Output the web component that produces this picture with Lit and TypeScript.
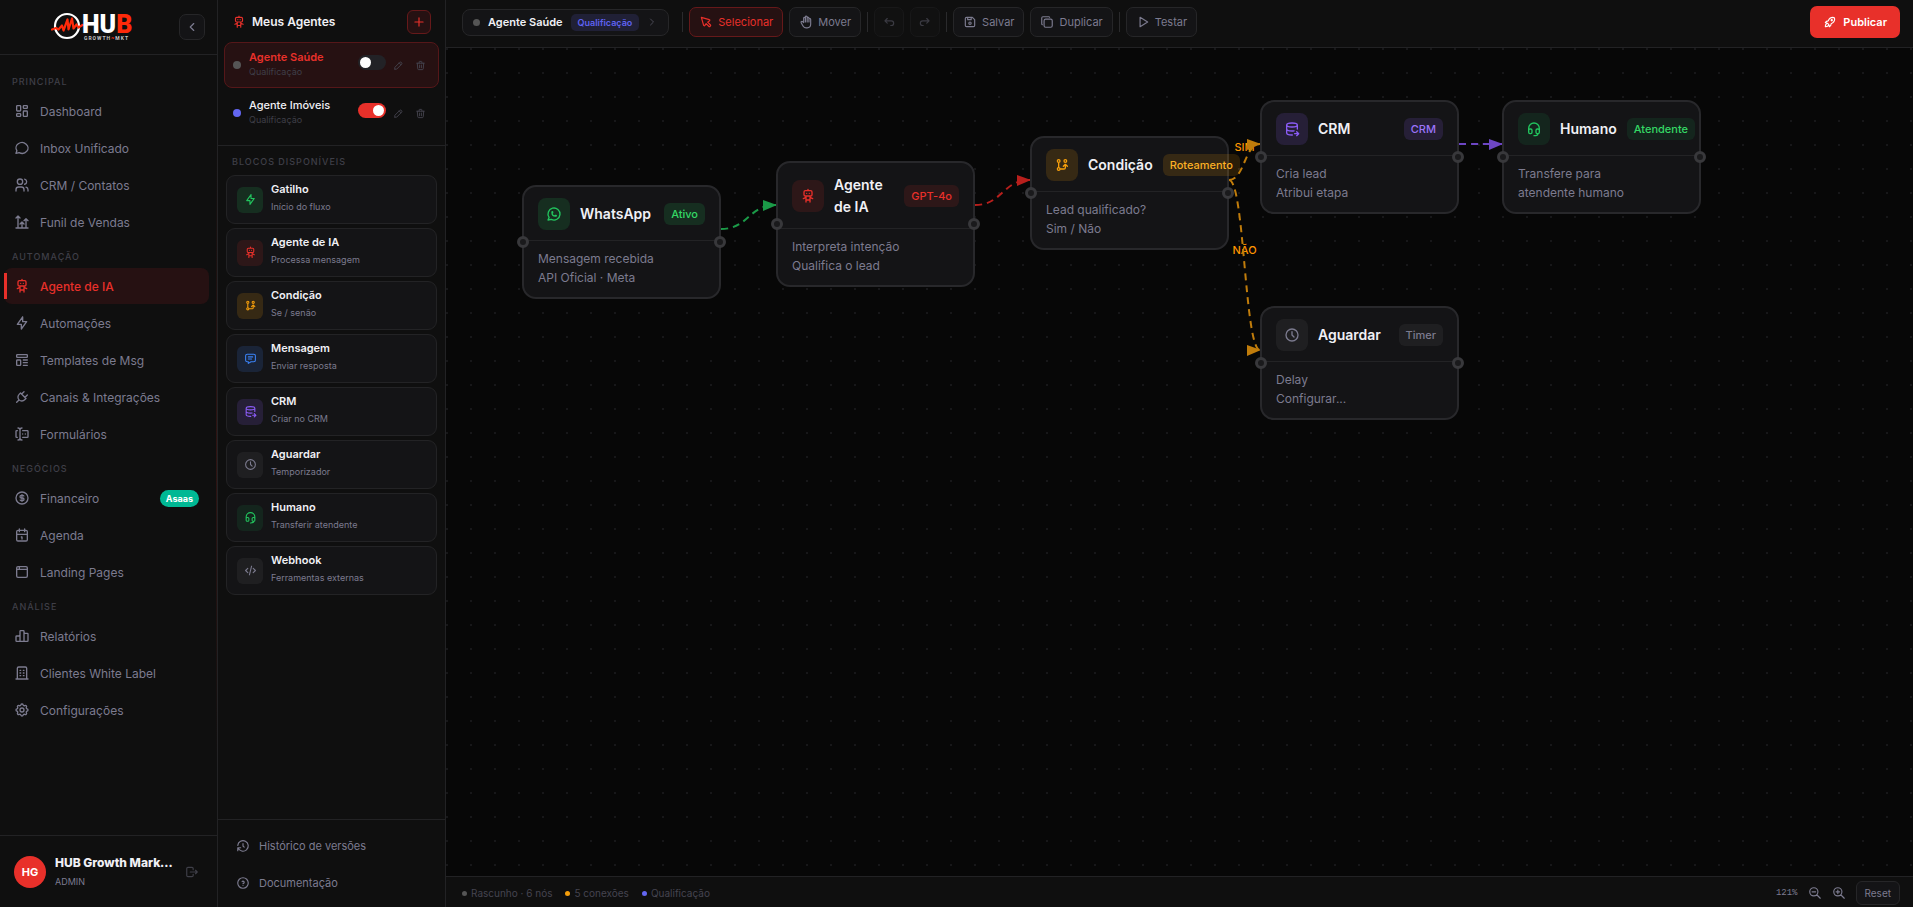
import { LitElement, html, css, svg, nothing } from "lit";
import { customElement } from "lit/decorators.js";
import { classMap } from "lit/directives/class-map.js";

const box = "a1 1 0 0 1 1 1v6a1 1 0 0 1 -1 1h-4a1 1 0 0 1 -1 -1v-6a1 1 0 0 1 1 -1";
const boxLow = "a1 1 0 0 1 1 1v2a1 1 0 0 1 -1 1h-4a1 1 0 0 1 -1 -1v-2a1 1 0 0 1 1 -1";
const ring = "M3 12a9 9 0 1 0 18 0a9 9 0 1 0 -18 0";

const ICONS: Record<string, string> = {
  dashboard: `M5 4h4${box}M5 16h4${boxLow}M15 12h4${box}M15 4h4${boxLow}`,
  chat: "M3 20l1.3 -3.9c-2.324 -3.437 -1.426 -7.872 2.1 -10.374c3.526 -2.501 8.59 -2.296 11.845 .48c3.255 2.777 3.695 7.266 1.029 10.501c-2.666 3.235 -7.615 4.215 -11.574 2.293l-4.7 1",
  users: "M5 7a4 4 0 1 0 8 0a4 4 0 1 0 -8 0M3 21v-2a4 4 0 0 1 4 -4h4a4 4 0 0 1 4 4v2M16 3.13a4 4 0 0 1 0 7.75M21 21v-2a4 4 0 0 0 -3 -3.85",
  funnel: "M18 21v-14M9 15l3 -3l3 3M15 10l3 -3l3 3M3 21h18M12 21v-9M3 6l3 -3l3 3M6 21v-18",
  robot: "M6 6a2 2 0 0 1 2 -2h8a2 2 0 0 1 2 2v4a2 2 0 0 1 -2 2h-8a2 2 0 0 1 -2 -2zM12 2v2M9 12v9M15 12v9M5 16l4 -2M15 14l4 2M9 18h6M10 8v.01M14 8v.01",
  bolt: "M13 3v7h6l-8 11v-7h-6l8 -11",
  template: "M4 5a1 1 0 0 1 1 -1h14a1 1 0 0 1 1 1v2a1 1 0 0 1 -1 1h-14a1 1 0 0 1 -1 -1zM4 13a1 1 0 0 1 1 -1h4a1 1 0 0 1 1 1v6a1 1 0 0 1 -1 1h-4a1 1 0 0 1 -1 -1zM14 12h6M14 16h6M14 20h6",
  plug: "M9.785 6l8.215 8.215l-2.054 2.054a5.81 5.81 0 1 1 -8.215 -8.215l2.054 -2.054zM4 20l3.5 -3.5M15 4l-3.5 3.5M20 9l-3.5 3.5",
  forms: "M12 3a3 3 0 0 0 -3 3v12a3 3 0 0 0 3 3M6 3a3 3 0 0 1 3 3v12a3 3 0 0 1 -3 3M13 7h7a1 1 0 0 1 1 1v8a1 1 0 0 1 -1 1h-7M5 7h-1a1 1 0 0 0 -1 1v8a1 1 0 0 0 1 1h1M17 12h.01M13 12h.01",
  coin: `${ring}M14.8 9a2 2 0 0 0 -1.8 -1h-2a2 2 0 1 0 0 4h2a2 2 0 1 1 0 4h-2a2 2 0 0 1 -1.8 -1M12 7v10`,
  calendar: "M4 7a2 2 0 0 1 2 -2h12a2 2 0 0 1 2 2v12a2 2 0 0 1 -2 2h-12a2 2 0 0 1 -2 -2zM16 3v4M8 3v4M4 11h16M11 15h1M12 15v3",
  browser: "M4 6a2 2 0 0 1 2 -2h12a2 2 0 0 1 2 2v12a2 2 0 0 1 -2 2h-12a2 2 0 0 1 -2 -2zM4 8h16M8 4v4",
  chart: "M3 13a1 1 0 0 1 1 -1h4a1 1 0 0 1 1 1v6a1 1 0 0 1 -1 1h-4a1 1 0 0 1 -1 -1zM15 9a1 1 0 0 1 1 -1h4a1 1 0 0 1 1 1v10a1 1 0 0 1 -1 1h-4a1 1 0 0 1 -1 -1zM9 5a1 1 0 0 1 1 -1h4a1 1 0 0 1 1 1v14a1 1 0 0 1 -1 1h-4a1 1 0 0 1 -1 -1z",
  building: "M3 21h18M9 8h1M9 12h1M9 16h1M14 8h1M14 12h1M14 16h1M5 21v-16a2 2 0 0 1 2 -2h10a2 2 0 0 1 2 2v16",
  gear: "M10.325 4.317c.426 -1.756 2.924 -1.756 3.35 0a1.724 1.724 0 0 0 2.573 1.066c1.543 -.94 3.31 .826 2.37 2.37a1.724 1.724 0 0 0 1.065 2.572c1.756 .426 1.756 2.924 0 3.35a1.724 1.724 0 0 0 -1.066 2.573c.94 1.543 -.826 3.31 -2.37 2.37a1.724 1.724 0 0 0 -2.572 1.065c-.426 1.756 -2.924 1.756 -3.35 0a1.724 1.724 0 0 0 -2.573 -1.066c-1.543 .94 -3.31 -.826 -2.37 -2.37a1.724 1.724 0 0 0 -1.065 -2.572c-1.756 -.426 -1.756 -2.924 0 -3.35a1.724 1.724 0 0 0 1.066 -2.573c-.94 -1.543 .826 -3.31 2.37 -2.37c1 .608 2.296 .07 2.572 -1.065zM9 12a3 3 0 1 0 6 0a3 3 0 0 0 -6 0",
  branch: "M5 18a2 2 0 1 0 4 0a2 2 0 1 0 -4 0M5 6a2 2 0 1 0 4 0a2 2 0 1 0 -4 0M15 6a2 2 0 1 0 4 0a2 2 0 1 0 -4 0M7 8v8M9 18h6a2 2 0 0 0 2 -2v-5M14 14l3 -3l3 3",
  message: "M8 9h8M8 13h6M18 4a3 3 0 0 1 3 3v8a3 3 0 0 1 -3 3h-5l-5 3v-3h-2a3 3 0 0 1 -3 -3v-8a3 3 0 0 1 3 -3h12z",
  database: "M4 6c0 1.657 3.582 3 8 3s8 -1.343 8 -3s-3.582 -3 -8 -3s-8 1.343 -8 3M4 6v6c0 1.657 3.582 3 8 3c1.118 0 2.183 -.086 3.15 -.241M20 12v-6M4 12v6c0 1.657 3.582 3 8 3c.157 0 .312 -.002 .466 -.005M16 19h6M19 16l3 3l-3 3",
  clock: `${ring}M12 7v5l3 3`,
  headset: "M4 14v-3a8 8 0 1 1 16 0v3M18 19c0 1.657 -2.686 3 -6 3M4 14a2 2 0 0 1 2 -2h1a2 2 0 0 1 2 2v3a2 2 0 0 1 -2 2h-1a2 2 0 0 1 -2 -2v-3zM15 14a2 2 0 0 1 2 -2h1a2 2 0 0 1 2 2v3a2 2 0 0 1 -2 2h-1a2 2 0 0 1 -2 -2v-3z",
  code: "M7 8l-4 4l4 4M17 8l4 4l-4 4M14 4l-4 16",
  whatsapp: "M3 21l1.65 -3.8a9 9 0 1 1 3.4 2.9l-5.05 .9M9 10a.5 .5 0 0 0 1 0v-1a.5 .5 0 0 0 -1 0v1a5 5 0 0 0 5 5h1a.5 .5 0 0 0 0 -1h-1a.5 .5 0 0 0 0 1",
  pointer: "M7.904 17.563a1.2 1.2 0 0 0 2.228 .308l2.09 -3.093l4.907 4.907a1.067 1.067 0 0 0 1.509 0l1.047 -1.047a1.067 1.067 0 0 0 0 -1.509l-4.907 -4.907l3.113 -2.09a1.2 1.2 0 0 0 -.309 -2.228l-13.582 -3.904l3.904 13.563z",
  hand: "M8 13v-7.5a1.5 1.5 0 0 1 3 0v6.5M11 5.5v-2a1.5 1.5 0 1 1 3 0v8.5M14 5.5a1.5 1.5 0 0 1 3 0v6.5M17 7.5a1.5 1.5 0 0 1 3 0v8.5a6 6 0 0 1 -6 6h-2h.208a6 6 0 0 1 -5.012 -2.7a69.74 69.74 0 0 1 -.196 -.3c-.312 -.479 -1.407 -2.388 -3.286 -5.728a1.5 1.5 0 0 1 .536 -2.022a1.867 1.867 0 0 1 2.28 .28l1.47 1.47",
  undo: "M9 14l-4 -4l4 -4M5 10h11a4 4 0 1 1 0 8h-1",
  redo: "M15 14l4 -4l-4 -4M19 10h-11a4 4 0 1 0 0 8h1",
  save: "M6 4h10l4 4v10a2 2 0 0 1 -2 2h-12a2 2 0 0 1 -2 -2v-12a2 2 0 0 1 2 -2M10 14a2 2 0 1 0 4 0a2 2 0 1 0 -4 0M14 4v4h-6v-4",
  copy: "M7 9.667a2.667 2.667 0 0 1 2.667 -2.667h8.666a2.667 2.667 0 0 1 2.667 2.667v8.666a2.667 2.667 0 0 1 -2.667 2.667h-8.666a2.667 2.667 0 0 1 -2.667 -2.667zM4.012 16.737a2.005 2.005 0 0 1 -1.012 -1.737v-10c0 -1.1 .9 -2 2 -2h10c.75 0 1.158 .385 1.5 1",
  play: "M7 4v16l13 -8z",
  rocket: "M4 13a8 8 0 0 1 7 7a6 6 0 0 0 3 -5a9 9 0 0 0 6 -8a3 3 0 0 0 -3 -3a9 9 0 0 0 -8 6a6 6 0 0 0 -5 3M7 14a6 6 0 0 0 -3 6a6 6 0 0 0 6 -3M14 9a1 1 0 1 0 2 0a1 1 0 1 0 -2 0",
  history: "M12 8v4l2 2M3.05 11a9 9 0 1 1 .5 4m-.5 5v-5h5",
  help: `${ring}M12 16v.01M12 13a2 2 0 0 0 .914 -3.782a1.98 1.98 0 0 0 -2.414 .483`,
  logout: "M14 8v-2a2 2 0 0 0 -2 -2h-7a2 2 0 0 0 -2 2v12a2 2 0 0 0 2 2h7a2 2 0 0 0 2 -2v-2M9 12h12l-3 -3M18 15l3 -3",
  pencil: "M4 20h4l10.5 -10.5a2.828 2.828 0 1 0 -4 -4l-10.5 10.5v4M13.5 6.5l4 4",
  trash: "M4 7h16M10 11v6M14 11v6M5 7l1 12a2 2 0 0 0 2 2h8a2 2 0 0 0 2 -2l1 -12M9 7v-3a1 1 0 0 1 1 -1h4a1 1 0 0 1 1 1v3",
  left: "M15 6l-6 6l6 6",
  right: "M9 6l6 6l-6 6",
  plus: "M12 5v14M5 12h14",
  zoomIn: "M3 10a7 7 0 1 0 14 0a7 7 0 1 0 -14 0M7 10h6M10 7v6M21 21l-6 -6",
  zoomOut: "M3 10a7 7 0 1 0 14 0a7 7 0 1 0 -14 0M7 10h6M21 21l-6 -6",
};

const icon = (name: string, size = 14) => html`<svg class="icon" width=${size} height=${size} viewBox="0 0 24 24"
  fill="none" stroke="currentColor" stroke-width="2" stroke-linecap="round" stroke-linejoin="round"
  aria-hidden="true"><path d=${ICONS[name]}></path></svg>`;

const shared = css`
  :host { box-sizing: border-box; font-family: Inter, "Liberation Sans", sans-serif; color: #f0f0f5; }
  *, *::before, *::after { box-sizing: border-box; }
  .icon { display: block; flex: none; }
  button { font: inherit; color: inherit; background: none; border: 0; padding: 0; margin: 0; cursor: pointer; }
  a { color: inherit; text-decoration: none; }
  .tile { display: flex; align-items: center; justify-content: center; flex: none; }
  .green { color: #22c55e; background: rgba(34, 197, 94, 0.15); }
  .mint { color: #22c55e; background: rgba(34, 197, 94, 0.1); }
  .red { color: #e8302a; background: rgba(232, 48, 42, 0.12); }
  .amber { color: #f59e0b; background: rgba(245, 158, 11, 0.15); }
  .blue { color: #3b82f6; background: rgba(59, 130, 246, 0.15); }
  .purple { color: #8b5cf6; background: rgba(139, 92, 246, 0.15); }
  .gray { color: #7c7b8f; background: rgba(255, 255, 255, 0.05); }
`;

interface NavItem { icon: string; label: string; badge?: string; active?: boolean; }

@customElement("side-nav")
export class SideNav extends LitElement {
  static styles = [shared, css`
    :host { display: flex; flex-direction: column; width: 218px; flex: none; position: relative;
      background: #0f0f0f; border-right: 1px solid #222224; }
    :host::after { content: ""; position: absolute; top: 15%; bottom: 15%; right: 0; width: 1px;
      background: linear-gradient(transparent, rgba(232, 48, 42, 0.15), transparent); }
    header { display: flex; align-items: center; height: 55px; padding: 0 12px 0 51px; border-bottom: 1px solid #222224; }
    .collapse { margin-left: auto; width: 26px; height: 26px; border: 1px solid #262628; border-radius: 7px;
      background: #141416; color: #7c7b8f; }
    .mark { font-family: Roboto, sans-serif; font-weight: 900; font-size: 25px; }
    .tagline { font-family: Roboto, sans-serif; font-weight: 700; font-size: 5px; letter-spacing: 1px; }
    nav { flex: 1; padding: 11px 8px 0 4px; }
    h2 { margin: 0; padding: 10px 8px 5px; font-size: 9px; line-height: 12px; font-weight: 500;
      letter-spacing: 1px; color: #3f3f48; }
    .item { position: relative; display: flex; align-items: center; gap: 10px; height: 36px; margin-bottom: 1px;
      padding: 0 10px; border-radius: 8px; font-size: 12px; color: #7c7b8f; }
    .item.active { background: #261112; color: #e8302a; font-weight: 500; }
    .item.active::before { content: ""; position: absolute; left: 0; top: 5px; bottom: 5px; width: 3px; background: #e8302a; }
    .badge { margin-left: auto; padding: 0 6px; border-radius: 9px; background: #00b894; color: #fff;
      font-size: 9px; line-height: 17px; font-weight: 700; }
    footer { display: flex; align-items: center; height: 72px; padding: 0 18px 0 14px; border-top: 1px solid #222224; }
    .avatar { width: 32px; height: 32px; border-radius: 50%; background: #e8302a; color: #fff;
      font-size: 11px; font-weight: 700; }
    .who { flex: 1; min-width: 0; padding: 0 8px 0 9px; }
    .name { font-size: 12px; line-height: 20px; font-weight: 800; overflow: hidden; text-overflow: ellipsis; white-space: nowrap; }
    .role { font-size: 9px; line-height: 18px; color: #7c7b8f; }
    .logout { color: #3f3f48; }
  `];

  private groups: { title: string; items: NavItem[] }[] = [
    { title: "PRINCIPAL", items: [
      { icon: "dashboard", label: "Dashboard" }, { icon: "chat", label: "Inbox Unificado" },
      { icon: "users", label: "CRM / Contatos" }, { icon: "funnel", label: "Funil de Vendas" }] },
    { title: "AUTOMAÇÃO", items: [
      { icon: "robot", label: "Agente de IA", active: true }, { icon: "bolt", label: "Automações" },
      { icon: "template", label: "Templates de Msg" }, { icon: "plug", label: "Canais & Integrações" },
      { icon: "forms", label: "Formulários" }] },
    { title: "NEGÓCIOS", items: [
      { icon: "coin", label: "Financeiro", badge: "Asaas" }, { icon: "calendar", label: "Agenda" },
      { icon: "browser", label: "Landing Pages" }] },
    { title: "ANÁLISE", items: [
      { icon: "chart", label: "Relatórios" }, { icon: "building", label: "Clientes White Label" },
      { icon: "gear", label: "Configurações" }] },
  ];

  render() {
    return html`
      <header>
        <svg class="icon" width="84" height="30" viewBox="0 0 84 30" role="img" aria-label="HUB Growth MKT">
          <circle cx="16" cy="14" r="12" fill="none" stroke="#fff" stroke-width="2.2"></circle>
          <path d="M1 17.5l4 -1.5l2.5 1.5l3.5 -4l1.5 5l4 -11l1 10l3.5 -11l1.5 10l3 -4l2 3l4 -2.5"
            fill="none" stroke="#ff2a0a" stroke-width="2.2" stroke-linejoin="round" stroke-linecap="round"></path>
          <text class="mark" x="31" y="21" fill="#fff">HU<tspan fill="#ff2a0a">B</tspan></text>
          <text class="tagline" x="33" y="28" fill="#c8c8c8">GROWTH<tspan fill="#ff2a0a">~</tspan>MKT</text>
        </svg>
        <button class="tile collapse" aria-label="Recolher menu">${icon("left", 14)}</button>
      </header>
      <nav>
        ${this.groups.map((g) => html`
          <h2>${g.title}</h2>
          ${g.items.map((i) => html`
            <a class=${classMap({ item: true, active: !!i.active })} href="#">
              ${icon(i.icon, 16)}<span>${i.label}</span>
              ${i.badge ? html`<span class="badge">${i.badge}</span>` : nothing}
            </a>`)}`)}
      </nav>
      <footer>
        <div class="tile avatar">HG</div>
        <div class="who"><div class="name">HUB Growth Marketing</div><div class="role">ADMIN</div></div>
        <button class="logout" aria-label="Sair">${icon("logout", 14)}</button>
      </footer>`;
  }
}

@customElement("agents-panel")
export class AgentsPanel extends LitElement {
  static styles = [shared, css`
    :host { display: flex; flex-direction: column; width: 228px; flex: none; background: #0f0f0f; border-right: 1px solid #222224; }
    header { display: flex; align-items: center; gap: 6px; padding: 10px 14px 8px 14px; color: #e8302a; }
    h1 { flex: 1; margin: 0; font-size: 12px; line-height: 24px; font-weight: 600; color: #f0f0f5; }
    .add { width: 24px; height: 24px; border: 1px solid #66191a; border-radius: 6px; background: #261112; color: #e8302a; }
    .agents { display: grid; gap: 2px; padding: 0 6px 9px; border-bottom: 1px solid #222224; }
    .agent { display: flex; align-items: center; height: 46px; padding: 0 7px 0 8px; border: 1px solid transparent; border-radius: 8px; }
    .agent.active { background: #261112; border-color: #551719; }
    .dot { width: 8px; height: 8px; border-radius: 50%; background: #6366f1; }
    .active .dot { background: #555; }
    .info { flex: 1; padding: 0 0 2px 8px; }
    .name { font-size: 11px; line-height: 15px; font-weight: 500; }
    .active .name { color: #e8302a; font-weight: 600; }
    .sub { font-size: 9px; line-height: 13px; color: #3f3f48; }
    .switch { display: flex; padding-bottom: 5px; }
    .switch input { appearance: none; margin: 0; width: 28px; height: 15px; border-radius: 8px; background: #222226;
      display: flex; align-items: center; padding: 0 2px; cursor: pointer; }
    .switch input::before { content: ""; width: 11px; height: 11px; border-radius: 50%; background: #fff; }
    .switch input:checked { background: #e8302a; justify-content: flex-end; }
    .tool { width: 22px; height: 22px; color: #45444f; }
    .switch + .tool { margin-left: 1px; }
    .blocks { flex: 1; padding: 10px 8px; }
    h2 { margin: 0 0 7px; padding: 0 6px; font-size: 9px; line-height: 12px; font-weight: 500; letter-spacing: 1px; color: #3f3f48; }
    ul { display: grid; gap: 4px; margin: 0; padding: 0; list-style: none; }
    .block { display: flex; align-items: center; gap: 8px; width: 100%; height: 49px; padding: 0 10px; text-align: left;
      border: 1px solid #232325; border-radius: 9px; background: #141416; }
    .block .tile { width: 26px; height: 26px; border-radius: 6px; }
    .text { padding-bottom: 3px; }
    .title { font-size: 11px; line-height: 18px; font-weight: 600; }
    .note { font-size: 9px; line-height: 18px; color: #7c7b8f; }
    footer { padding: 7px 18px 6px; border-top: 1px solid #222224; }
    footer a { display: flex; align-items: center; gap: 9px; height: 37px; font-size: 11px; color: #7c7b8f; }
  `];

  private blocks = [
    ["bolt", "green", "Gatilho", "Início do fluxo"],
    ["robot", "red", "Agente de IA", "Processa mensagem"],
    ["branch", "amber", "Condição", "Se / senão"],
    ["message", "blue", "Mensagem", "Enviar resposta"],
    ["database", "purple", "CRM", "Criar no CRM"],
    ["clock", "gray", "Aguardar", "Temporizador"],
    ["headset", "mint", "Humano", "Transferir atendente"],
    ["code", "gray", "Webhook", "Ferramentas externas"],
  ];

  private agent(name: string, on: boolean, active: boolean) {
    return html`<div class=${classMap({ agent: true, active })}>
      <span class="dot"></span>
      <div class="info"><div class="name">${name}</div><div class="sub">Qualificação</div></div>
      <label class="switch"><input type="checkbox" role="switch" aria-label=${"Ativar " + name} .checked=${on}></label>
      <button class="tile tool" aria-label=${"Editar " + name}>${icon("pencil", 11)}</button>
      <button class="tile tool" aria-label=${"Excluir " + name}>${icon("trash", 11)}</button>
    </div>`;
  }

  render() {
    return html`
      <header>${icon("robot", 14)}<h1>Meus Agentes</h1>
        <button class="tile add" aria-label="Novo agente">${icon("plus", 14)}</button></header>
      <section class="agents">
        ${this.agent("Agente Saúde", false, true)}
        ${this.agent("Agente Imóveis", true, false)}
      </section>
      <section class="blocks">
        <h2>BLOCOS DISPONÍVEIS</h2>
        <ul>${this.blocks.map(([ic, tone, title, note]) => html`<li><button class="block" draggable="true">
          <span class="tile ${tone}">${icon(ic, 13)}</span>
          <div class="text"><div class="title">${title}</div><div class="note">${note}</div></div>
        </button></li>`)}</ul>
      </section>
      <footer>
        <a href="#">${icon("history", 14)}Histórico de versões</a>
        <a href="#">${icon("help", 14)}Documentação</a>
      </footer>`;
  }
}

@customElement("editor-toolbar")
export class EditorToolbar extends LitElement {
  static styles = [shared, css`
    :host { display: flex; align-items: center; gap: 6px; height: 48px; padding: 0 13px 3px 16px;
      background: #0f0f0f; border-bottom: 1px solid #222224; font-size: 11px; white-space: nowrap; }
    button, .icon { flex: none; }
    .current { display: flex; align-items: center; height: 27px; padding: 0 10px; margin-right: 7px;
      border: 1px solid #262628; border-radius: 8px; background: #141416; font-weight: 600; }
    .dot { width: 7px; height: 7px; margin-right: 8px; border-radius: 50%; background: #555; }
    .kind { margin: 0 7px 0 8px; padding: 0 7px; border-radius: 5px; background: rgba(99, 102, 241, 0.15);
      color: #5f62f0; font-size: 9px; line-height: 17px; }
    .current .icon { color: #4a4955; }
    .rule { width: 1px; height: 20px; background: #2a2a2c; }
    .action { display: flex; align-items: center; justify-content: center; gap: 5px; height: 30px; padding: 0 9px;
      border: 1px solid #262628; border-radius: 7px; background: #141416; color: #7c7b8f; }
    .action.active { border-color: #66191a; background: #261112; color: #e8302a; }
    .square { width: 30px; padding: 0; }
    .square:disabled { opacity: 0.4; }
    .publish { display: flex; align-items: center; gap: 6px; height: 32px; margin-left: auto; padding: 0 13px;
      border-radius: 7px; background: #e8302a; color: #fff; font-weight: 600; }
  `];

  render() {
    return html`
      <button class="current"><span class="dot"></span>Agente Saúde<span class="kind">Qualificação</span>${icon("right", 12)}</button>
      <span class="rule"></span>
      <button class="action active" aria-pressed="true">${icon("pointer")}Selecionar</button>
      <button class="action">${icon("hand")}Mover</button>
      <span class="rule"></span>
      <button class="action square" disabled aria-label="Desfazer">${icon("undo")}</button>
      <button class="action square" disabled aria-label="Refazer">${icon("redo")}</button>
      <span class="rule"></span>
      <button class="action">${icon("save")}Salvar</button>
      <button class="action">${icon("copy")}Duplicar</button>
      <span class="rule"></span>
      <button class="action">${icon("play")}Testar</button>
      <button class="publish">${icon("rocket")}Publicar</button>`;
  }
}

interface FlowNode { x: number; y: number; icon: string; tone: string; title: string; tag: string; lines: string[]; }

const NODE_WIDTH = 199;

@customElement("flow-canvas")
export class FlowCanvas extends LitElement {
  static styles = [shared, css`
    :host { display: block; position: relative; overflow: hidden; background-color: #070707;
      background-image: radial-gradient(circle at 1px 1px, #171719 1px, transparent 1px); background-size: 24px 24px; }
    .edges { position: absolute; inset: 0; width: 100%; height: 100%; }
    .edge { fill: none; stroke-width: 2; stroke-dasharray: 7 5; }
    .edge-label { font-size: 11px; font-weight: 500; fill: #ff9500; text-anchor: middle; }
    .node { position: absolute; width: 199px; border: 2px solid #28282b; border-radius: 14px; background: #141416; }
    .head { display: flex; align-items: center; gap: 10px; padding: 11px 14px 10px; border-bottom: 1px solid #232325; }
    .head .tile { width: 32px; height: 32px; border-radius: 8px; }
    h3 { margin: 0; font-size: 14px; line-height: 22px; font-weight: 600; }
    .tag { margin-left: auto; padding: 0 7px; border-radius: 6px; font-size: 11px; line-height: 22px; font-weight: 500; white-space: nowrap; }
    .tag.green, .tag.mint { color: #34d865; }
    .tag.purple { color: #9b74fa; }
    .tag.amber { color: #fbb024; }
    p { margin: 0; padding: 8px 14px 10px; font-size: 12px; line-height: 19px; color: #7c7b8f; white-space: pre-line; }
    .port { position: absolute; top: 50%; width: 12px; height: 12px; margin-top: -6px; border: 3px solid #38383b;
      border-radius: 50%; background: #1a1a1c; }
    .in { left: -7px; }
    .out { right: -7px; }
  `];

  private nodes: FlowNode[] = [
    { x: 76, y: 137, icon: "whatsapp", tone: "green", title: "WhatsApp", tag: "Ativo", lines: ["Mensagem recebida", "API Oficial · Meta"] },
    { x: 330, y: 113, icon: "robot", tone: "red", title: "Agente de IA", tag: "GPT-4o", lines: ["Interpreta intenção", "Qualifica o lead"] },
    { x: 584, y: 88, icon: "branch", tone: "amber", title: "Condição", tag: "Roteamento", lines: ["Lead qualificado?", "Sim / Não"] },
    { x: 814, y: 52, icon: "database", tone: "purple", title: "CRM", tag: "CRM", lines: ["Cria lead", "Atribui etapa"] },
    { x: 814, y: 258, icon: "clock", tone: "gray", title: "Aguardar", tag: "Timer", lines: ["Delay", "Configurar..."] },
    { x: 1056, y: 52, icon: "headset", tone: "mint", title: "Humano", tag: "Atendente", lines: ["Transfere para", "atendente humano"] },
  ];

  private edges = [
    { from: 0, to: 1, color: "#1b9a48" },
    { from: 1, to: 2, color: "#b81f1c" },
    { from: 2, to: 3, color: "#c07c0b", label: "SIM", labelY: 103 },
    { from: 2, to: 4, color: "#c07c0b", label: "NÃO", labelY: 206 },
    { from: 3, to: 5, color: "#6d46c4" },
  ];

  private edge(e: { from: number; to: number; color: string; label?: string; labelY?: number }) {
    const a = this.nodes[e.from], b = this.nodes[e.to];
    const x1 = a.x + NODE_WIDTH, y1 = a.y + 44, x2 = b.x, y2 = b.y + 44, mid = (x1 + x2) / 2;
    return svg`
      ${e.label ? svg`<text class="edge-label" x=${mid} y=${e.labelY}>${e.label}</text>` : nothing}
      <path class="edge" stroke=${e.color} d="M${x1} ${y1}C${mid} ${y1} ${mid} ${y2} ${x2} ${y2}"></path>
      <path fill=${e.color} d="M${x2 - 13} ${y2 - 5}L${x2 + 1} ${y2}L${x2 - 13} ${y2 + 6}z"></path>`;
  }

  render() {
    return html`
      <svg class="edges">${this.edges.map((e) => this.edge(e))}</svg>
      ${this.nodes.map((n) => html`<article class="node" style="left:${n.x}px;top:${n.y}px">
        <div class="head"><span class="tile ${n.tone}">${icon(n.icon, 16)}</span><h3>${n.title}</h3><span class="tag ${n.tone}">${n.tag}</span></div>
        <p>${n.lines.join("\n")}</p>
        <span class="port in"></span><span class="port out"></span>
      </article>`)}`;
  }
}

@customElement("status-bar")
export class StatusBar extends LitElement {
  static styles = [shared, css`
    :host { display: flex; align-items: center; gap: 13px; height: 31px; padding: 2px 13px 0 16px;
      background: #0f0f0f; border-top: 1px solid #222224; font-size: 10px; color: #45444f; }
    .stat { display: flex; align-items: center; gap: 4px; }
    .dot { width: 5px; height: 5px; border-radius: 50%; background: #555; }
    .dot.warn { background: #f59e0b; }
    .dot.info { background: #6366f1; }
    .zoom { display: flex; align-items: center; gap: 10px; margin-left: auto; color: #7c7b8f; }
    output { font-family: "Liberation Mono", monospace; font-size: 9px; }
    .reset { height: 24px; padding: 0 8px; border: 1px solid #262628; border-radius: 6px; background: #141416; font-size: 10px; }
  `];

  render() {
    return html`
      <span class="stat"><i class="dot"></i>Rascunho · 6 nós</span>
      <span class="stat"><i class="dot warn"></i>5 conexões</span>
      <span class="stat"><i class="dot info"></i>Qualificação</span>
      <div class="zoom">
        <output>121%</output>
        <button aria-label="Diminuir zoom">${icon("zoomOut", 14)}</button>
        <button aria-label="Aumentar zoom">${icon("zoomIn", 14)}</button>
        <button class="reset">Reset</button>
      </div>`;
  }
}

@customElement("app-root")
export class AppRoot extends LitElement {
  static styles = css`
    :host { display: flex; height: 100vh; overflow: hidden; background: #070707; }
    main { flex: 1; min-width: 0; display: flex; flex-direction: column; }
    flow-canvas { flex: 1; }
  `;

  render() {
    return html`
      <side-nav></side-nav>
      <agents-panel></agents-panel>
      <main>
        <editor-toolbar></editor-toolbar>
        <flow-canvas></flow-canvas>
        <status-bar></status-bar>
      </main>`;
  }
}
